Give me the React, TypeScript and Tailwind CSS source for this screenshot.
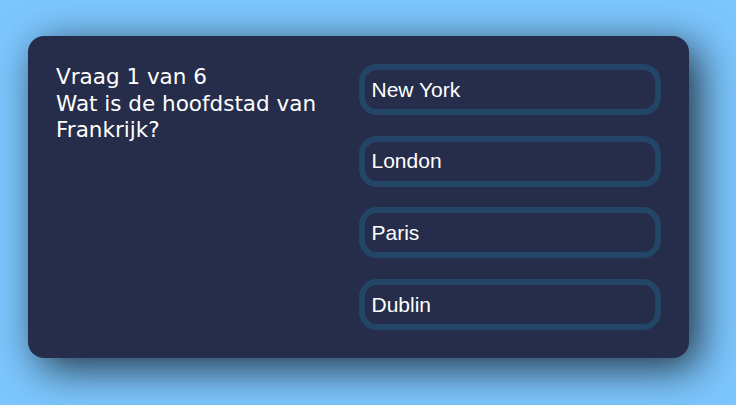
const answers = ['New York', 'London', 'Paris', 'Dublin']

export default function App() {
  return (
    <div className="min-h-[405px] w-full bg-[#7cc6fe] pt-[36px] pl-[28px]">
      <div className="flex h-[322px] w-[661px] rounded-[16px] bg-[#252d4a] p-[28px] text-white shadow-[10px_10px_42px_0px_rgba(0,0,0,0.75)]">
        <div className="w-1/2 font-['DejaVu_Sans',sans-serif] text-[21.5px] leading-[26.5px]">
          <div>Vraag 1 van 6</div>
          <div>Wat is de hoofdstad van Frankrijk?</div>
        </div>
        <div className="flex w-1/2 flex-col justify-between">
          {answers.map((a) => (
            <button
              key={a}
              className="flex h-[51px] w-full items-center rounded-[18px] border-[6px] border-[#234668] bg-[#252d4a] px-[7px] text-left font-['Liberation_Sans',Arial,sans-serif] text-[21px] text-white"
            >
              {a}
            </button>
          ))}
        </div>
      </div>
    </div>
  )
}
